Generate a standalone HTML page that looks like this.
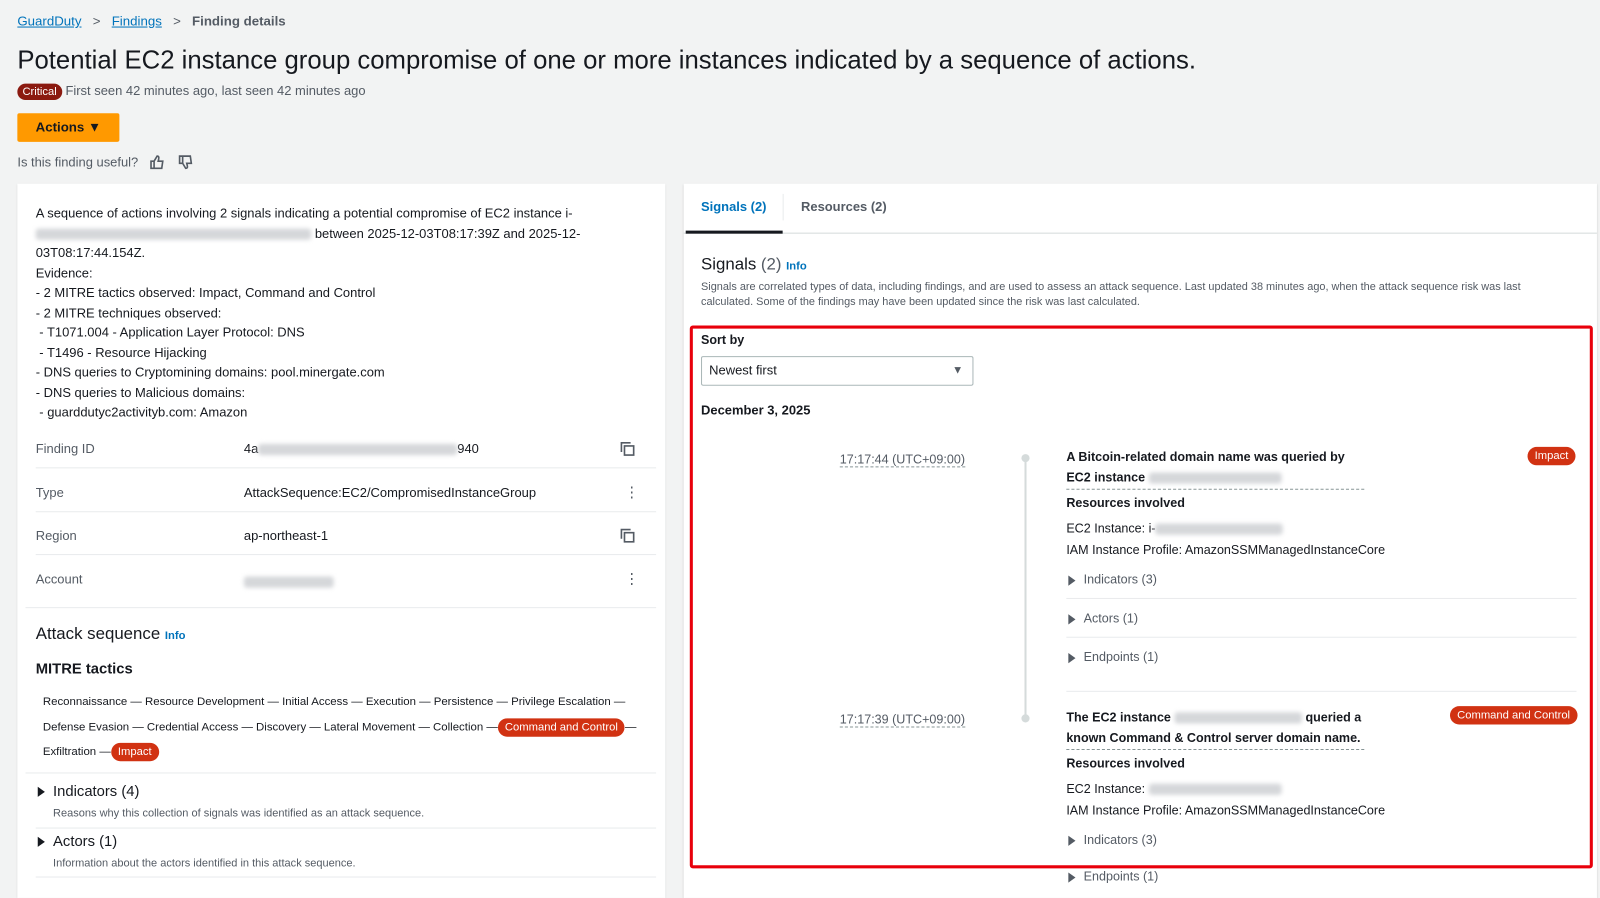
<!DOCTYPE html>
<html><head><meta charset="utf-8"><style>
*{box-sizing:border-box;margin:0;padding:0}
html,body{width:1600px;height:880px;overflow:hidden;background:#f2f3f3}
#w{position:absolute;left:0;top:0;width:1568px;height:863px;transform:scale(1.0204);transform-origin:0 0;font-family:"Liberation Sans",sans-serif;color:#16191f}
.a{position:absolute;white-space:nowrap}
.lnk{color:#0073bb;text-decoration:underline}
.blur{display:inline-block;background:#d5d7da;filter:blur(2px);height:11px;vertical-align:middle;border-radius:3px}
.s12{font-size:12.7px}
.pill{background:#d13212;color:#fff;border-radius:12px;padding:3px 7px;font-size:11px}
.hr{position:absolute;height:1px;background:#e9ebed}
.tri{display:inline-block;width:0;height:0;border-left:7px solid #16191f;border-top:5px solid transparent;border-bottom:5px solid transparent;margin-right:8px;vertical-align:middle}
.g{color:#545b64}
.dot{border-bottom:1px dashed #879596}
.sg{font-size:12.3px}
</style></head><body><div id="w">
<div class="a" style="left:17px;top:13px;font-size:13px"><span class="lnk">GuardDuty</span><span class="g" style="margin:0 11px">&gt;</span><span class="lnk">Findings</span><span class="g" style="margin:0 11px">&gt;</span><span class="g" style="font-weight:bold">Finding details</span></div>
<div class="a" style="left:17px;top:45px;font-size:25.2px">Potential EC2 instance group compromise of one or more instances indicated by a sequence of actions.</div>
<div class="a" style="left:17px;top:82px;font-size:12.7px"><span style="background:#8b1a10;color:#fff;border-radius:9px;padding:2px 5px;font-size:11px">Critical</span> <span class="g">First seen 42 minutes ago, last seen 42 minutes ago</span></div>
<div class="a" style="left:17px;top:111px;width:100px;height:28px;background:#ff9900;font-size:13px;font-weight:bold;line-height:28px;text-align:center;border-radius:2px">Actions ▼</div>
<div class="a g" style="left:17px;top:152px;font-size:12.7px">Is this finding useful?</div>
<svg class="a" style="left:146px;top:151px" width="16" height="16" viewBox="0 0 16 16" fill="none" stroke="#545b64" stroke-width="1.6"><path d="M2 7h3v7H2zM5 7l3-5c1.5 0 2 1 1.5 3L9 7h4.5l-1 7H5"/></svg>
<svg class="a" style="left:174px;top:151px" width="16" height="16" viewBox="0 0 16 16" fill="none" stroke="#545b64" stroke-width="1.6"><path d="M2 2h3v7H2zM5 9l3 5c1.5 0 2-1 1.5-3L9 9h4.5l-1-7H5"/></svg>

<div class="a" style="left:17px;top:180px;width:635px;height:700px;background:#fff;box-shadow:0 1px 2px rgba(0,0,0,.15)"></div>
<div class="a s12" style="left:35px;top:200px;line-height:19.5px">A sequence of actions involving 2 signals indicating a potential compromise of EC2 instance i-<br><span class="blur" style="width:270px"></span> between 2025-12-03T08:17:39Z and 2025-12-<br>03T08:17:44.154Z.<br>Evidence:<br>- 2 MITRE tactics observed: Impact, Command and Control<br>- 2 MITRE techniques observed:<br>&nbsp;- T1071.004 - Application Layer Protocol: DNS<br>&nbsp;- T1496 - Resource Hijacking<br>- DNS queries to Cryptomining domains: pool.minergate.com<br>- DNS queries to Malicious domains:<br>&nbsp;- guarddutyc2activityb.com: Amazon</div>
<div class="a s12 g" style="left:35px;top:433px">Finding ID</div><div class="a s12" style="left:239px;top:433px">4a<span class="blur" style="width:195px"></span>940</div>
<svg class="a" style="left:607px;top:432px" width="16" height="16" viewBox="0 0 16 16" fill="none" stroke="#545b64" stroke-width="1.6"><path d="M2 11V2h9M5 5h9v9H5z"/></svg>
<div class="hr" style="left:35px;top:458px;width:608px"></div>
<div class="a s12 g" style="left:35px;top:476px">Type</div><div class="a s12" style="left:239px;top:476px">AttackSequence:EC2/CompromisedInstanceGroup</div><div class="a g" style="left:612px;top:474px;font-size:14px">⋮</div>
<div class="hr" style="left:35px;top:501px;width:608px"></div>
<div class="a s12 g" style="left:35px;top:518px">Region</div><div class="a s12" style="left:239px;top:518px">ap-northeast-1</div>
<svg class="a" style="left:607px;top:517px" width="16" height="16" viewBox="0 0 16 16" fill="none" stroke="#545b64" stroke-width="1.6"><path d="M2 11V2h9M5 5h9v9H5z"/></svg>
<div class="hr" style="left:35px;top:543px;width:608px"></div>
<div class="a s12 g" style="left:35px;top:561px">Account</div><div class="a" style="left:239px;top:562px"><span class="blur" style="width:88px"></span></div><div class="a g" style="left:612px;top:559px;font-size:14px">⋮</div>
<div class="hr" style="left:25px;top:595px;width:618px"></div>
<div class="a" style="left:35px;top:612px;font-size:16.5px">Attack sequence <span style="color:#0073bb;font-size:11px;font-weight:bold">Info</span></div>
<div class="a" style="left:35px;top:648px;font-size:14.5px;font-weight:bold">MITRE tactics</div>
<div class="a" style="left:42px;top:676px;font-size:11.2px;line-height:24.5px">Reconnaissance — Resource Development — Initial Access — Execution — Persistence — Privilege Escalation —<br>Defense Evasion — Credential Access — Discovery — Lateral Movement — Collection —<span class="pill">Command and Control</span>—<br>Exfiltration —<span class="pill">Impact</span></div>
<div class="hr" style="left:25px;top:757px;width:618px"></div>
<div class="a" style="left:37px;top:768px;font-size:14.5px"><span class="tri"></span>Indicators (4)</div>
<div class="a g" style="left:52px;top:791px;font-size:10.8px">Reasons why this collection of signals was identified as an attack sequence.</div>
<div class="hr" style="left:35px;top:811px;width:608px"></div>
<div class="a" style="left:37px;top:817px;font-size:14.5px"><span class="tri"></span>Actors (1)</div>
<div class="a g" style="left:52px;top:840px;font-size:10.8px">Information about the actors identified in this attack sequence.</div>
<div class="hr" style="left:35px;top:859px;width:608px"></div>

<div class="a" style="left:670px;top:180px;width:895px;height:700px;background:#fff;box-shadow:0 1px 2px rgba(0,0,0,.15)"></div>
<div class="a" style="left:687px;top:196px;font-size:12.7px;color:#0073bb;font-weight:bold">Signals (2)</div>
<div class="a" style="left:767px;top:190px;width:1px;height:26px;background:#e9ebed"></div>
<div class="a" style="left:785px;top:196px;font-size:12.7px;color:#545b64;font-weight:bold">Resources (2)</div>
<div class="a" style="left:670px;top:228px;width:895px;height:1px;background:#d5dbdb"></div>
<div class="a" style="left:672px;top:226px;width:95px;height:3px;background:#16191f"></div>
<div class="a" style="left:687px;top:250px;font-size:16.5px">Signals <span class="g">(2)</span> <span style="color:#0073bb;font-size:11px;font-weight:bold">Info</span></div>
<div class="a g" style="left:687px;top:274px;font-size:10.7px;line-height:15px">Signals are correlated types of data, including findings, and are used to assess an attack sequence. Last updated 38 minutes ago, when the attack sequence risk was last<br>calculated. Some of the findings may have been updated since the risk was last calculated.</div>
<div class="a" style="left:676px;top:319px;width:885px;height:532px;border:3px solid #e8000b;border-radius:3px"></div>
<div class="a" style="left:687px;top:326px;font-size:12.3px;font-weight:bold">Sort by</div>
<div class="a" style="left:687px;top:349px;width:267px;height:29px;border:1px solid #aab7b8;border-radius:2px;font-size:12.7px;line-height:27px;padding-left:7px">Newest first<span style="position:absolute;right:9px;font-size:11px;color:#545b64">▼</span></div>
<div class="a" style="left:687px;top:395px;font-size:12.7px;font-weight:bold">December 3, 2025</div>
<div class="a" style="left:1004px;top:448px;width:2px;height:258px;background:#d5dbdb"></div>
<div class="a" style="left:1001px;top:445px;width:8px;height:8px;border-radius:4px;background:#d5dbdb"></div>
<div class="a" style="left:1001px;top:700px;width:8px;height:8px;border-radius:4px;background:#d5dbdb"></div>
<div class="a g sg" style="left:823px;top:443px"><span class="dot">17:17:44 (UTC+09:00)</span></div>
<div class="a g sg" style="left:823px;top:698px"><span class="dot">17:17:39 (UTC+09:00)</span></div>
<div class="a sg" style="left:1045px;top:438px;font-weight:bold;line-height:20px;width:292px;border-bottom:1px dashed #879596;padding-bottom:1px">A Bitcoin-related domain name was queried by<br>EC2 instance <span class="blur" style="width:130px"></span></div>
<div class="a pill" style="left:1497px;top:438px">Impact</div>
<div class="a sg" style="left:1045px;top:486px;font-weight:bold">Resources involved</div>
<div class="a sg" style="left:1045px;top:511px">EC2 Instance: i-<span class="blur" style="width:125px"></span></div>
<div class="a sg" style="left:1045px;top:532px">IAM Instance Profile: AmazonSSMManagedInstanceCore</div>
<div class="a g sg" style="left:1047px;top:561px"><span class="tri" style="border-left-color:#545b64"></span>Indicators (3)</div>
<div class="hr" style="left:1045px;top:586px;width:500px"></div>
<div class="a g sg" style="left:1047px;top:599px"><span class="tri" style="border-left-color:#545b64"></span>Actors (1)</div>
<div class="hr" style="left:1045px;top:624px;width:500px"></div>
<div class="a g sg" style="left:1047px;top:637px"><span class="tri" style="border-left-color:#545b64"></span>Endpoints (1)</div>
<div class="hr" style="left:1045px;top:677px;width:500px"></div>
<div class="a sg" style="left:1045px;top:693px;font-weight:bold;line-height:20px;width:292px;border-bottom:1px dashed #879596;padding-bottom:1px">The EC2 instance <span class="blur" style="width:125px"></span> queried a<br>known Command &amp; Control server domain name.</div>
<div class="a pill" style="left:1421px;top:692px">Command and Control</div>
<div class="a sg" style="left:1045px;top:741px;font-weight:bold">Resources involved</div>
<div class="a sg" style="left:1045px;top:766px">EC2 Instance: <span class="blur" style="width:130px"></span></div>
<div class="a sg" style="left:1045px;top:787px">IAM Instance Profile: AmazonSSMManagedInstanceCore</div>
<div class="a g sg" style="left:1047px;top:816px"><span class="tri" style="border-left-color:#545b64"></span>Indicators (3)</div>
<div class="a g sg" style="left:1047px;top:852px"><span class="tri" style="border-left-color:#545b64"></span>Endpoints (1)</div>
</div></body></html>
